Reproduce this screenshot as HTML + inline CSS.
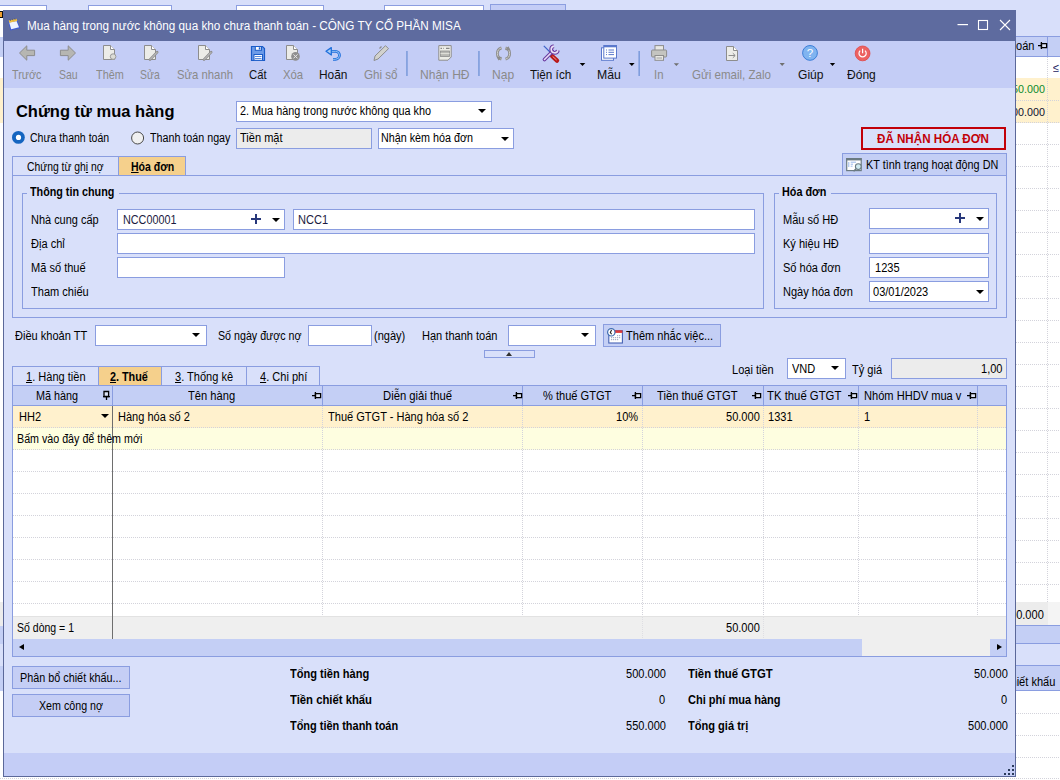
<!DOCTYPE html>
<html><head><meta charset="utf-8">
<style>
*{box-sizing:border-box;margin:0;padding:0}
html,body{width:1060px;height:780px;overflow:hidden;background:#d8dffa;font-family:"Liberation Sans",sans-serif;font-size:11px;color:#000}
.a{position:absolute}
.bgbox{position:absolute;background:#fff;border:1px solid #8c9ee0;border-bottom:none}
#win{position:absolute;left:3px;top:10px;width:1013px;height:767px;background:#d9e0fa;border:1px solid #5b6899;border-top:none}
#title{position:absolute;left:3px;top:10px;width:1013px;height:31px;background:#5e6b9f;color:#fff;font-size:11.7px}
#tb{position:absolute;left:4px;top:41px;width:1011px;height:47px;background:#c4cdf6}
.tbt{position:absolute;top:68px;width:120px;text-align:center;font-size:11.5px;line-height:14px;color:#8c8c8c;white-space:nowrap}
.inp{position:absolute;background:#fff;border:1px solid #8fa0e0;height:20px;white-space:nowrap;padding-left:5px;line-height:18px;font-size:11px}
.lbl{position:absolute;white-space:nowrap;font-size:11px}
.t{position:absolute;white-space:nowrap;transform-origin:0 50%}
.r{position:absolute}
.tri{position:absolute;width:0;height:0;border-style:solid;border-width:4px 4px 0;border-color:#000 transparent transparent}
.tril{position:absolute;width:0;height:0;border-style:solid;border-width:3.5px 5px 3.5px 0;border-color:transparent #000 transparent transparent}
.trir{position:absolute;width:0;height:0;border-style:solid;border-width:3.5px 0 3.5px 5px;border-color:transparent transparent transparent #000}
.plus{position:absolute;width:10px;height:10px;background:linear-gradient(#27377a,#27377a) center/10px 2px no-repeat,linear-gradient(#27377a,#27377a) center/2px 10px no-repeat}
.dots{position:absolute;background:repeating-linear-gradient(90deg,#d3d3db 0 1px,transparent 1px 2px)}
.vdots{position:absolute;background:repeating-linear-gradient(180deg,#d3d3db 0 1px,transparent 1px 2px)}
.pinv{position:absolute;width:6px;height:9px;border:1.5px solid #000;border-bottom:none}
.pinh{position:absolute;width:9px;height:7px}
</style></head><body>
<!-- background app -->
<div class="bgbox" style="left:-1px;top:5px;width:48px;height:10px"></div>
<div class="bgbox" style="left:88px;top:5px;width:84px;height:10px"></div>
<div class="bgbox" style="left:236px;top:5px;width:88px;height:10px"></div>
<div class="bgbox" style="left:384px;top:5px;width:100px;height:10px"></div>
<div class="bgbox" style="left:490px;top:4px;width:76px;height:10px;background:#c4cdf6"></div>

<div id="win"></div>
<div id="title"></div>
<div class="a" style="left:27px;top:18px;color:#fff;font-size:12px;line-height:16px;white-space:nowrap;transform:scaleX(0.976);transform-origin:0 0">Mua hàng trong nước không qua kho chưa thanh toán - CÔNG TY CỔ PHẦN MISA</div>
<div id="tb"></div>
<svg class="a" style="left:0;top:0" width="1060" height="90" viewBox="0 0 1060 90">
<!-- title icon -->
<path d="M8.2,21 L16.8,19.2 L20.2,28 L10.5,30.6 Z" fill="#3d5ad8"/>
<path d="M9.2,22.6 L16.5,21 L19,27.3 L11.2,29.3 Z" fill="#eef3ff"/>
<path d="M8.6,20.4 L16.6,18.8 L17.3,21 L9.3,22.8 Z" fill="#f2c040"/>
<path d="M10,19.3 L10.6,20.8 M12.3,18.8 L12.9,20.3 M14.6,18.3 L15.2,19.8" stroke="#556" stroke-width="0.8"/>
<!-- window buttons -->
<rect x="957.5" y="24" width="10.5" height="1.2" fill="#fff"/>
<rect x="978.5" y="20.5" width="9" height="9" fill="none" stroke="#fff" stroke-width="1.1"/>
<path d="M1000,20 L1010,30 M1010,20 L1000,30" stroke="#fff" stroke-width="1.1"/>
<!-- arrows -->
<path d="M19.5,53 L26.8,45.8 L26.8,50.2 L34.6,50.2 L34.6,55.6 L26.8,55.6 L26.8,60.2 Z" fill="#b6b6b2" stroke="#8d8d8d" stroke-width="1"/>
<path d="M75.5,53 L68.2,45.8 L68.2,50.2 L60.4,50.2 L60.4,55.6 L68.2,55.6 L68.2,60.2 Z" fill="#b6b6b2" stroke="#8d8d8d" stroke-width="1"/>
<!-- Them -->
<path d="M103.5,45.5 H110.5 L114.5,49.5 V59.5 H103.5 Z" fill="#ecece8" stroke="#8d8d8d" stroke-width="1"/>
<path d="M110.5,45.5 V49.5 H114.5" fill="#fff" stroke="#8d8d8d" stroke-width="1"/>
<circle cx="113.1" cy="56.6" r="2.8" fill="#dcdcd6" stroke="#9a9a9a" stroke-width="1"/>
<!-- Sua -->
<path d="M144.5,45.5 H151.5 L155.5,49.5 V59.5 H144.5 Z" fill="#ecece8" stroke="#8d8d8d" stroke-width="1"/>
<path d="M151.5,45.5 V49.5 H155.5" fill="#fff" stroke="#8d8d8d" stroke-width="1"/>
<path d="M157.2,52.2 L150,59.6" stroke="#8d8d8d" stroke-width="2.6" stroke-linecap="round"/>
<path d="M157.2,52.2 L150,59.6" stroke="#cfcfcf" stroke-width="1"/>
<!-- Sua nhanh -->
<path d="M198.5,45.5 H205.5 L209.5,49.5 V59.5 H198.5 Z" fill="#ecece8" stroke="#8d8d8d" stroke-width="1"/>
<path d="M205.5,45.5 V49.5 H209.5" fill="#fff" stroke="#8d8d8d" stroke-width="1"/>
<path d="M211.2,52.2 L204,59.6" stroke="#8d8d8d" stroke-width="2.6" stroke-linecap="round"/>
<path d="M211.2,52.2 L204,59.6" stroke="#cfcfcf" stroke-width="1"/>
<!-- Cat floppy -->
<path d="M251.5,46.5 L262.5,46.5 L264.5,48.5 L264.5,60.5 L251.5,60.5 Z" fill="#6c9be8" stroke="#1a5cc8" stroke-width="1.2"/>
<rect x="255.3" y="46.5" width="6.2" height="3.8" fill="#fff" stroke="#1a5cc8" stroke-width="1"/><rect x="258.8" y="47.3" width="1.6" height="2.2" fill="#1a5cc8"/>
<rect x="254" y="54.5" width="8.5" height="5.8" fill="#fff" stroke="#1a5cc8" stroke-width="1"/>
<path d="M255,56.5 H261.5 M255,58.5 H261.5" stroke="#4a7fd8" stroke-width="0.9"/>
<!-- Xoa -->
<path d="M286.5,45.5 H293.5 L297.5,49.5 V59.5 H286.5 Z" fill="#ecece8" stroke="#8d8d8d" stroke-width="1"/>
<path d="M293.5,45.5 V49.5 H297.5" fill="#fff" stroke="#8d8d8d" stroke-width="1"/>
<circle cx="295.5" cy="56.4" r="4.3" fill="#8f8f8f"/>
<path d="M293.5,54.4 L297.5,58.4 M297.5,54.4 L293.5,58.4" stroke="#e8e8e8" stroke-width="1"/>
<!-- Hoan undo -->
<path d="M328.5,51.3 H335.5 A4,4 0 0 1 335.5,59.3 H333" fill="none" stroke="#1f6fdc" stroke-width="2.8"/>
<path d="M328.5,51.3 H335.5 A4,4 0 0 1 335.5,59.3 H333" fill="none" stroke="#a9cdf5" stroke-width="0.9"/>
<path d="M326,51.3 L331.3,47.6 L331.3,55 Z" fill="#a9cdf5" stroke="#1f6fdc" stroke-width="1.3" stroke-linejoin="round"/>
<!-- Ghi so pencil -->
<path d="M374,60.5 L375,56 L385.5,45.7 L388.5,48.7 L378,59 Z" fill="#d2d2ce" stroke="#8d8d8d" stroke-width="1"/>
<path d="M381.5,46.5 L379.5,48.5" stroke="#8d8d8d" stroke-width="1.2"/>
<!-- sep -->
<rect x="406.3" y="51" width="1.3" height="25" fill="#6e92d6"/>
<rect x="478.3" y="51" width="1.3" height="25" fill="#6e92d6"/>
<rect x="638.5" y="51" width="1.3" height="25" fill="#6e92d6"/>
<!-- Nhan HD -->
<path d="M438.8,45.6 H451.2 V57 L448,60.2 H438.8 Z" fill="#ecece6" stroke="#8d8d8d" stroke-width="1"/>
<path d="M440.5,48.3 H442 M443.2,48.3 H443.8 M446,48.3 H449.5" stroke="#6e6e6e" stroke-width="1"/>
<rect x="440.5" y="51" width="9" height="5.5" fill="#b8b8b4" stroke="#8d8d8d" stroke-width="0.8"/>
<path d="M440.5,53.6 H449.5" stroke="#ecece6" stroke-width="0.8"/>
<!-- Nap refresh -->
<path d="M505.5,47.8 A6,6 0 0 1 505.5,59.2" fill="none" stroke="#8d8d8d" stroke-width="2.8"/>
<path d="M505.5,47.8 A6,6 0 0 1 505.5,59.2" fill="none" stroke="#cfcfcb" stroke-width="1"/>
<path d="M501.5,59.2 A6,6 0 0 1 501.5,47.8" fill="none" stroke="#8d8d8d" stroke-width="2.8"/>
<path d="M501.5,59.2 A6,6 0 0 1 501.5,47.8" fill="none" stroke="#cfcfcb" stroke-width="1"/>
<path d="M508.5,46.3 L510.5,50.5 L505,50" fill="#8d8d8d"/>
<path d="M498.5,60.5 L496.5,56.5 L502,57" fill="#8d8d8d"/>
<!-- Tien ich -->
<path d="M543.8,45.8 L551,53" stroke="#3f63c8" stroke-width="1.2"/>
<path d="M552,56 L557,60.6" stroke="#b81818" stroke-width="4.4" stroke-linecap="round"/>
<path d="M552.6,56.4 L556.6,60" stroke="#f4a0a0" stroke-width="1"/>
<path d="M544.5,59.5 L552.5,51.5" stroke="#6a3aa0" stroke-width="3.8" stroke-linecap="round"/>
<path d="M544.5,59.5 L552.5,51.5" stroke="#e8def6" stroke-width="1.6" stroke-linecap="round"/>
<path d="M557.9,50.2 A3.4,3.4 0 1 1 553.9,46.1" fill="none" stroke="#6a3aa0" stroke-width="3.8"/>
<path d="M557.9,50.2 A3.4,3.4 0 1 1 553.9,46.1" fill="none" stroke="#e8def6" stroke-width="1.6"/>
<path d="M579.7,63 H585.3 L582.5,66 Z" fill="#000"/>
<!-- Mau -->
<rect x="601.5" y="47.8" width="12" height="12.5" fill="#fff" stroke="#5a78cc" stroke-width="1"/>
<rect x="603.8" y="45.5" width="12.7" height="12.6" fill="#fff" stroke="#5a78cc" stroke-width="1"/>
<rect x="603.8" y="45.5" width="12.7" height="1.8" fill="#5a78cc"/>
<path d="M606,50 H607 M608.5,50 H614 M606,52.3 H607 M608.5,52.3 H614 M606,54.6 H607 M608.5,54.6 H614" stroke="#5a78cc" stroke-width="1"/>
<path d="M629,63 H634.6 L631.8,66 Z" fill="#000"/>
<!-- In printer -->
<rect x="655" y="45.6" width="8.5" height="5" fill="#e8e8e4" stroke="#8d8d8d" stroke-width="1"/>
<rect x="651.6" y="50" width="15" height="7" rx="1" fill="#c4c4c0" stroke="#8d8d8d" stroke-width="1"/>
<rect x="655" y="55.5" width="8.5" height="4.8" fill="#e8e8e4" stroke="#8d8d8d" stroke-width="1"/>
<path d="M656.5,58 H662" stroke="#8d8d8d" stroke-width="0.8"/>
<path d="M673.8,63.2 H679 L676.4,66 Z" fill="#707070"/>
<!-- Gui email -->
<path d="M726.5,46.5 H733.5 L737.5,50.5 V60.5 H726.5 Z" fill="#ecece8" stroke="#8d8d8d" stroke-width="1"/>
<path d="M733.5,46.5 V50.5 H737.5" fill="#fff" stroke="#8d8d8d" stroke-width="1"/>
<path d="M728.5,55.5 H735 M732.8,53.2 L735.2,55.5 L732.8,57.8" fill="none" stroke="#8d8d8d" stroke-width="1"/>
<path d="M779.6,63 H784.8 L782.2,66 Z" fill="#707070"/>
<!-- Giup -->
<circle cx="810" cy="52.9" r="7.4" fill="#80b4f0" stroke="#3d7fd8" stroke-width="1"/>
<text x="810" y="57.3" text-anchor="middle" font-family="Liberation Sans" font-size="11.5" fill="#fff">?</text>
<path d="M829.9,63 H835.1 L832.5,66 Z" fill="#000"/>
<!-- Dong -->
<circle cx="862.6" cy="53.4" r="7.4" fill="#ec6262" stroke="#e04848" stroke-width="0.8"/>
<path d="M860.2,50.6 A3.6,3.6 0 1 0 865,50.6" fill="none" stroke="#fff" stroke-width="1.2"/>
<path d="M862.6,48.8 V53.2" stroke="#fff" stroke-width="1.2"/>
</svg>

<!--BODY-->
<div class="t" style="left:12.20px;top:67.47px;font-size:12.20px;line-height:16px;color:#8a8a8a;transform:scaleX(0.8851)">Trước</div>
<div class="t" style="left:58.90px;top:67.47px;font-size:12.20px;line-height:16px;color:#8a8a8a;transform:scaleX(0.8614)">Sau</div>
<div class="t" style="left:96.00px;top:67.47px;font-size:12.20px;line-height:16px;color:#8a8a8a;transform:scaleX(0.8914)">Thêm</div>
<div class="t" style="left:139.50px;top:67.47px;font-size:12.20px;line-height:16px;color:#8a8a8a;transform:scaleX(0.8532)">Sửa</div>
<div class="t" style="left:176.50px;top:67.47px;font-size:12.20px;line-height:16px;color:#8a8a8a;transform:scaleX(0.9271)">Sửa nhanh</div>
<div class="t" style="left:248.90px;top:67.47px;font-size:12.20px;line-height:16px;color:#111;transform:scaleX(0.9270)">Cất</div>
<div class="t" style="left:282.50px;top:67.47px;font-size:12.20px;line-height:16px;color:#8a8a8a;transform:scaleX(0.9305)">Xóa</div>
<div class="t" style="left:319.20px;top:67.47px;font-size:12.20px;line-height:16px;color:#111;transform:scaleX(0.9771)">Hoãn</div>
<div class="t" style="left:363.80px;top:67.47px;font-size:12.20px;line-height:16px;color:#8a8a8a;transform:scaleX(0.9529)">Ghi sổ</div>
<div class="t" style="left:419.90px;top:67.47px;font-size:12.20px;line-height:16px;color:#8a8a8a;transform:scaleX(0.9885)">Nhận HĐ</div>
<div class="t" style="left:491.90px;top:67.47px;font-size:12.20px;line-height:16px;color:#8a8a8a;transform:scaleX(0.9874)">Nạp</div>
<div class="t" style="left:530.20px;top:67.47px;font-size:12.20px;line-height:16px;color:#111;transform:scaleX(0.9617)">Tiện ích</div>
<div class="t" style="left:597.00px;top:67.47px;font-size:12.20px;line-height:16px;color:#111;transform:scaleX(1.0070)">Mẫu</div>
<div class="t" style="left:654.00px;top:67.47px;font-size:12.20px;line-height:16px;color:#8a8a8a;transform:scaleX(0.9337)">In</div>
<div class="t" style="left:692.40px;top:67.47px;font-size:12.20px;line-height:16px;color:#8a8a8a;transform:scaleX(0.9482)">Gửi email, Zalo</div>
<div class="t" style="left:797.80px;top:67.47px;font-size:12.20px;line-height:16px;color:#111;transform:scaleX(0.9895)">Giúp</div>
<div class="t" style="left:847.20px;top:67.47px;font-size:12.20px;line-height:16px;color:#111;transform:scaleX(0.9874)">Đóng</div>
<div class="t" style="left:15.90px;top:103.48px;font-size:16.50px;line-height:16px;font-weight:bold">Chứng từ mua hàng</div>
<div class="r" style="left:236px;top:101px;width:256px;height:21px;background:#fff;border:1px solid #8a9de0"></div>
<div class="t" style="left:239.50px;top:103.00px;font-size:12.00px;line-height:16px;transform:scaleX(0.9036)">2. Mua hàng trong nước không qua kho</div>
<div class="tri" style="left:478px;top:109px"></div>
<svg class="r" style="left:0;top:120px" width="160" height="30"><circle cx="18.4" cy="17.4" r="6.4" fill="#1565c0"/><circle cx="18.5" cy="17.4" r="2.6" fill="#fff"/><circle cx="137.6" cy="18" r="6" fill="#f0f0f0" stroke="#4a4a4a" stroke-width="1"/></svg>
<div class="t" style="left:30.00px;top:130.00px;font-size:12.00px;line-height:16px;transform:scaleX(0.8790)">Chưa thanh toán</div>
<div class="t" style="left:149.60px;top:130.00px;font-size:12.00px;line-height:16px;transform:scaleX(0.8926)">Thanh toán ngay</div>
<div class="r" style="left:236px;top:128px;width:136px;height:21px;background:#ececec;border:1px solid #8a9de0"></div>
<div class="t" style="left:240.00px;top:130.00px;font-size:12.00px;line-height:16px;transform:scaleX(0.9200)">Tiền mặt</div>
<div class="r" style="left:378px;top:128px;width:136px;height:21px;background:#fff;border:1px solid #8a9de0"></div>
<div class="t" style="left:381.40px;top:130.00px;font-size:12.00px;line-height:16px;transform:scaleX(0.8967)">Nhận kèm hóa đơn</div>
<div class="tri" style="left:501px;top:137px"></div>
<div class="r" style="left:861px;top:127px;width:145px;height:23px;border:2px solid #c20008"></div>
<div class="t" style="left:877.00px;top:131.34px;font-size:12.00px;line-height:16px;font-weight:bold;color:#c20008;transform:scaleX(0.9673)">ĐÃ NHẬN HÓA ĐƠN</div>
<div class="r" style="left:12px;top:175px;width:995px;height:143px;border:1px solid #8a9de0"></div>
<div class="r" style="left:12px;top:156px;width:107px;height:20px;background:#d9e0fa;border:1px solid #8a9de0"></div>
<div class="r" style="left:118px;top:156px;width:68px;height:20px;background:#f5d08c;border:1px solid #8a9de0"></div>
<div class="t" style="left:27.20px;top:159.00px;font-size:12.00px;line-height:16px;transform:scaleX(0.8630)">Chứng từ gh<u>i</u> nợ</div>
<div class="t" style="left:131.40px;top:159.00px;font-size:12.00px;line-height:16px;font-weight:bold;transform:scaleX(0.8781)"><u>H</u>óa đơn</div>
<div class="r" style="left:842px;top:153px;width:165px;height:23px;background:#c4cff5;border:1px solid #8a9de0"></div>
<div class="t" style="left:866.40px;top:157.00px;font-size:12.00px;line-height:16px;transform:scaleX(0.9028)">KT tình trạng hoạt động DN</div>
<svg class="r" style="left:844px;top:156px" width="20" height="18"><rect x="2.7" y="2.6" width="14.5" height="12" fill="#fff" stroke="#6b7b82" stroke-width="1.2"/><rect x="2.2" y="2.2" width="15.5" height="2.2" fill="#6b7b82"/><path d="M4.8,6 V11 M6.7,6.2 H12 M6.7,8.2 H9 M6.7,10.2 H8.5" stroke="#8fb0e8" stroke-width="0.9"/><circle cx="14.3" cy="10.6" r="2.9" fill="#cfeaf0" stroke="#6b7b82" stroke-width="1.1"/><path d="M12.1,12.7 L9.6,15.2" stroke="#6b7b82" stroke-width="1.5"/></svg>
<div class="r" style="left:22px;top:193px;width:742px;height:116px;border:1px solid #8a9de0"></div>
<div class="r" style="left:774px;top:193px;width:223px;height:116px;border:1px solid #8a9de0"></div>
<div class="r" style="left:27px;top:185px;width:92px;height:16px;background:#d9e0fa"></div>
<div class="t" style="left:30.00px;top:184.00px;font-size:12.00px;line-height:16px;font-weight:bold;transform:scaleX(0.8970)">Thông tin chung</div>
<div class="r" style="left:779px;top:185px;width:52px;height:16px;background:#d9e0fa"></div>
<div class="t" style="left:781.80px;top:184.00px;font-size:12.00px;line-height:16px;font-weight:bold;transform:scaleX(0.9005)">Hóa đơn</div>
<div class="t" style="left:31.10px;top:212.00px;font-size:12.00px;line-height:16px;transform:scaleX(0.9129)">Nhà cung cấp</div>
<div class="t" style="left:31.10px;top:236.00px;font-size:12.00px;line-height:16px;transform:scaleX(0.9200)">Địa chỉ</div>
<div class="t" style="left:31.10px;top:260.00px;font-size:12.00px;line-height:16px;transform:scaleX(0.9200)">Mã số thuế</div>
<div class="t" style="left:31.10px;top:284.00px;font-size:12.00px;line-height:16px;transform:scaleX(0.9200)">Tham chiếu</div>
<div class="r" style="left:117px;top:209px;width:168px;height:21px;background:#fff;border:1px solid #8a9de0"></div>
<div class="t" style="left:123.00px;top:212.00px;font-size:12.00px;line-height:16px;color:#1a1a40;transform:scaleX(0.8995)">NCC00001</div>
<div class="plus" style="left:251px;top:214px"></div>
<div class="tri" style="left:271.5px;top:217.5px"></div>
<div class="r" style="left:293px;top:209px;width:462px;height:21px;background:#fff;border:1px solid #8a9de0"></div>
<div class="t" style="left:298.30px;top:212.00px;font-size:12.00px;line-height:16px;color:#1a1a40;transform:scaleX(0.9200)">NCC1</div>
<div class="r" style="left:117px;top:233px;width:638px;height:21px;background:#fff;border:1px solid #8a9de0"></div>
<div class="r" style="left:117px;top:257px;width:168px;height:21px;background:#fff;border:1px solid #8a9de0"></div>
<div class="t" style="left:783.10px;top:212.00px;font-size:12.00px;line-height:16px;transform:scaleX(0.9200)">Mẫu số HĐ</div>
<div class="t" style="left:783.10px;top:236.00px;font-size:12.00px;line-height:16px;transform:scaleX(0.9200)">Ký hiệu HĐ</div>
<div class="t" style="left:783.10px;top:260.00px;font-size:12.00px;line-height:16px;transform:scaleX(0.9200)">Số hóa đơn</div>
<div class="t" style="left:783.10px;top:284.00px;font-size:12.00px;line-height:16px;transform:scaleX(0.9200)">Ngày hóa đơn</div>
<div class="r" style="left:869px;top:208px;width:120px;height:21px;background:#fff;border:1px solid #8a9de0"></div>
<div class="plus" style="left:955px;top:213px"></div>
<div class="tri" style="left:975.5px;top:216.5px"></div>
<div class="r" style="left:869px;top:233px;width:120px;height:21px;background:#fff;border:1px solid #8a9de0"></div>
<div class="r" style="left:869px;top:257px;width:120px;height:21px;background:#fff;border:1px solid #8a9de0"></div>
<div class="t" style="left:874.60px;top:260.00px;font-size:12.00px;line-height:16px;transform:scaleX(0.9200)">1235</div>
<div class="r" style="left:869px;top:281px;width:120px;height:21px;background:#fff;border:1px solid #8a9de0"></div>
<div class="t" style="left:873.00px;top:284.00px;font-size:12.00px;line-height:16px;transform:scaleX(0.9200)">03/01/2023</div>
<div class="tri" style="left:975.5px;top:289.5px"></div>
<div class="t" style="left:15.00px;top:328.00px;font-size:12.00px;line-height:16px;transform:scaleX(0.9200)">Điều khoản TT</div>
<div class="r" style="left:95px;top:325px;width:112px;height:21px;background:#fff;border:1px solid #8a9de0"></div>
<div class="tri" style="left:192px;top:333px"></div>
<div class="t" style="left:218.00px;top:328.00px;font-size:12.00px;line-height:16px;transform:scaleX(0.8900)">Số ngày được nợ</div>
<div class="r" style="left:308px;top:325px;width:64px;height:21px;background:#fff;border:1px solid #8a9de0"></div>
<div class="t" style="left:374.00px;top:328.00px;font-size:12.00px;line-height:16px;transform:scaleX(0.9200)">(ngày)</div>
<div class="t" style="left:421.70px;top:328.00px;font-size:12.00px;line-height:16px;transform:scaleX(0.9200)">Hạn thanh toán</div>
<div class="r" style="left:508px;top:325px;width:88px;height:21px;background:#fff;border:1px solid #8a9de0"></div>
<div class="tri" style="left:581px;top:333px"></div>
<div class="r" style="left:603px;top:324px;width:118px;height:23px;background:#c4cff5;border:1px solid #8a9de0"></div>
<div class="t" style="left:626.20px;top:328.00px;font-size:12.00px;line-height:16px;transform:scaleX(0.9200)">Thêm nhắc việc...</div>
<svg class="r" style="left:604px;top:326px" width="22" height="20"><rect x="4.8" y="4.7" width="13.6" height="12.3" fill="#fff" stroke="#4562b4" stroke-width="1.1"/><rect x="4.8" y="4.3" width="13.6" height="2.6" fill="#dd3a3a"/><rect x="13" y="9" width="1.2" height="1.2" fill="#a8b0c8"/><rect x="15" y="9" width="1.2" height="1.2" fill="#a8b0c8"/><rect x="7" y="11" width="1.2" height="1.2" fill="#a8b0c8"/><rect x="9" y="11" width="1.2" height="1.2" fill="#a8b0c8"/><rect x="11" y="11" width="1.2" height="1.2" fill="#a8b0c8"/><rect x="13" y="11" width="1.2" height="1.2" fill="#a8b0c8"/><rect x="15" y="11" width="1.2" height="1.2" fill="#a8b0c8"/><rect x="7" y="13" width="1.2" height="1.2" fill="#a8b0c8"/><rect x="9" y="13" width="1.2" height="1.2" fill="#a8b0c8"/><rect x="11" y="13" width="1.2" height="1.2" fill="#a8b0c8"/><rect x="13" y="13" width="1.2" height="1.2" fill="#a8b0c8"/><circle cx="7.3" cy="6.3" r="3.7" fill="#fff" stroke="#3f6cb0" stroke-width="1.2"/><path d="M7.6,3.9 L6.3,6.4 L7.6,8.3" fill="none" stroke="#222" stroke-width="1.1"/></svg>
<div class="r" style="left:484px;top:350px;width:51px;height:8px;background:#d9e0fa;border:1px solid #8a9de0"></div>
<div class="tri" style="left:506px;top:352px;border-width:0 3.5px 4px;border-color:transparent transparent #333"></div>
<div class="t" style="left:732.00px;top:362.00px;font-size:12.00px;line-height:16px;transform:scaleX(0.9200)">Loại tiền</div>
<div class="r" style="left:787px;top:358px;width:59px;height:21px;background:#fff;border:1px solid #8a9de0"></div>
<div class="t" style="left:792.00px;top:361.00px;font-size:12.00px;line-height:16px;transform:scaleX(0.9200)">VND</div>
<div class="tri" style="left:831px;top:366px"></div>
<div class="t" style="left:852.00px;top:362.00px;font-size:12.00px;line-height:16px;transform:scaleX(0.9200)">Tỷ giá</div>
<div class="r" style="left:891px;top:358px;width:116px;height:21px;background:#ececec;border:1px solid #8a9de0"></div>
<div class="t" style="left:980.51px;top:361.00px;font-size:12.00px;line-height:16px;transform:scaleX(0.9200)">1,00</div>
<div class="r" style="left:12px;top:366px;width:87px;height:20px;background:#d9e0fa;border:1px solid #8a9de0"></div>
<div class="t" style="left:26.20px;top:369.00px;font-size:12.00px;line-height:16px;transform:scaleX(0.9200)"><u>1</u>. Hàng tiền</div>
<div class="r" style="left:98px;top:366px;width:64px;height:20px;background:#f5d08c;border:1px solid #8a9de0"></div>
<div class="t" style="left:110.20px;top:369.00px;font-size:12.00px;line-height:16px;font-weight:bold;transform:scaleX(0.9000)"><u>2</u>. Thuế</div>
<div class="r" style="left:161px;top:366px;width:86px;height:20px;background:#d9e0fa;border:1px solid #8a9de0"></div>
<div class="t" style="left:174.70px;top:369.00px;font-size:12.00px;line-height:16px;transform:scaleX(0.9200)"><u>3</u>. Thống kê</div>
<div class="r" style="left:246px;top:366px;width:74px;height:20px;background:#d9e0fa;border:1px solid #8a9de0"></div>
<div class="t" style="left:260.30px;top:369.00px;font-size:12.00px;line-height:16px;transform:scaleX(0.9200)"><u>4</u>. Chi phí</div>
<div class="r" style="left:12px;top:385px;width:995px;height:272px;background:#fff;border:1px solid #8a9de0"></div>
<div class="r" style="left:13px;top:386px;width:993px;height:20px;background:#c4cff5;border-bottom:1px solid #8a9de0"></div>
<div class="r" style="left:112px;top:386px;width:1px;height:20px;background:#8a9de0"></div>
<div class="r" style="left:322px;top:386px;width:1px;height:20px;background:#8a9de0"></div>
<div class="r" style="left:522px;top:386px;width:1px;height:20px;background:#8a9de0"></div>
<div class="r" style="left:642px;top:386px;width:1px;height:20px;background:#8a9de0"></div>
<div class="r" style="left:763px;top:386px;width:1px;height:20px;background:#8a9de0"></div>
<div class="r" style="left:858px;top:386px;width:1px;height:20px;background:#8a9de0"></div>
<div class="r" style="left:977px;top:386px;width:1px;height:20px;background:#8a9de0"></div>
<div class="r" style="left:13px;top:406px;width:993px;height:22px;background:#fff1cd"></div>
<div class="r" style="left:13px;top:428px;width:993px;height:22px;background:#fefee0"></div>
<div class="dots" style="left:13px;top:427px;width:993px;height:1px"></div>
<div class="dots" style="left:13px;top:449px;width:993px;height:1px"></div>
<div class="dots" style="left:13px;top:471px;width:993px;height:1px"></div>
<div class="dots" style="left:13px;top:493px;width:993px;height:1px"></div>
<div class="dots" style="left:13px;top:515px;width:993px;height:1px"></div>
<div class="dots" style="left:13px;top:537px;width:993px;height:1px"></div>
<div class="dots" style="left:13px;top:559px;width:993px;height:1px"></div>
<div class="dots" style="left:13px;top:581px;width:993px;height:1px"></div>
<div class="dots" style="left:13px;top:603px;width:993px;height:1px"></div>
<div class="vdots" style="left:322px;top:406px;width:1px;height:210px"></div>
<div class="vdots" style="left:522px;top:406px;width:1px;height:210px"></div>
<div class="vdots" style="left:642px;top:406px;width:1px;height:210px"></div>
<div class="vdots" style="left:763px;top:406px;width:1px;height:210px"></div>
<div class="vdots" style="left:858px;top:406px;width:1px;height:210px"></div>
<div class="vdots" style="left:977px;top:406px;width:1px;height:210px"></div>
<div class="r" style="left:112px;top:406px;width:1px;height:233px;background:#6e6e6e"></div>
<div class="t" style="left:35.60px;top:388.00px;font-size:12.00px;line-height:16px;transform:scaleX(0.9015)">Mã hàng</div>
<div class="t" style="left:188.20px;top:388.00px;font-size:12.00px;line-height:16px;transform:scaleX(0.9288)">Tên hàng</div>
<div class="t" style="left:382.80px;top:388.00px;font-size:12.00px;line-height:16px;transform:scaleX(0.9403)">Diễn giải thuế</div>
<div class="t" style="left:543.20px;top:388.00px;font-size:12.00px;line-height:16px;transform:scaleX(0.9227)">% thuế GTGT</div>
<div class="t" style="left:657.00px;top:388.00px;font-size:12.00px;line-height:16px;transform:scaleX(0.9333)">Tiền thuế GTGT</div>
<div class="t" style="left:766.90px;top:388.00px;font-size:12.00px;line-height:16px;transform:scaleX(0.9443)">TK thuế GTGT</div>
<div class="t" style="left:863.50px;top:388.00px;font-size:12.00px;line-height:16px;transform:scaleX(0.9244)">Nhóm HHDV mua v</div>
<svg class="r" style="left:100px;top:388px" width="14" height="14"><path d="M4,3.5 H8.6 V8.5 H4 Z" fill="#dde3f5" stroke="#000" stroke-width="1.3"/><path d="M3,8.6 H9.9 M6.5,8.6 V12" stroke="#000" stroke-width="1.3"/></svg>
<svg class="r" style="left:312px;top:392px" width="12" height="9"><path d="M3.5,1.6 H8.6 V5.6 H3.5 Z" fill="#dde3f5" stroke="#000" stroke-width="1.3"/><path d="M0,3.6 H3.4 M3.4,0 V7" stroke="#000" stroke-width="1.3"/></svg>
<svg class="r" style="left:513px;top:392px" width="12" height="9"><path d="M3.5,1.6 H8.6 V5.6 H3.5 Z" fill="#dde3f5" stroke="#000" stroke-width="1.3"/><path d="M0,3.6 H3.4 M3.4,0 V7" stroke="#000" stroke-width="1.3"/></svg>
<svg class="r" style="left:632px;top:392px" width="12" height="9"><path d="M3.5,1.6 H8.6 V5.6 H3.5 Z" fill="#dde3f5" stroke="#000" stroke-width="1.3"/><path d="M0,3.6 H3.4 M3.4,0 V7" stroke="#000" stroke-width="1.3"/></svg>
<svg class="r" style="left:752px;top:392px" width="12" height="9"><path d="M3.5,1.6 H8.6 V5.6 H3.5 Z" fill="#dde3f5" stroke="#000" stroke-width="1.3"/><path d="M0,3.6 H3.4 M3.4,0 V7" stroke="#000" stroke-width="1.3"/></svg>
<svg class="r" style="left:848px;top:392px" width="12" height="9"><path d="M3.5,1.6 H8.6 V5.6 H3.5 Z" fill="#dde3f5" stroke="#000" stroke-width="1.3"/><path d="M0,3.6 H3.4 M3.4,0 V7" stroke="#000" stroke-width="1.3"/></svg>
<svg class="r" style="left:967px;top:392px" width="12" height="9"><path d="M3.5,1.6 H8.6 V5.6 H3.5 Z" fill="#dde3f5" stroke="#000" stroke-width="1.3"/><path d="M0,3.6 H3.4 M3.4,0 V7" stroke="#000" stroke-width="1.3"/></svg>
<div class="t" style="left:19.00px;top:409.00px;font-size:12.00px;line-height:16px;transform:scaleX(0.9200)">HH2</div>
<div class="tri" style="left:100.5px;top:414px"></div>
<div class="t" style="left:118.00px;top:409.00px;font-size:12.00px;line-height:16px;transform:scaleX(0.9200)">Hàng hóa số 2</div>
<div class="t" style="left:328.20px;top:409.00px;font-size:12.00px;line-height:16px;transform:scaleX(0.9200)">Thuế GTGT - Hàng hóa số 2</div>
<div class="t" style="left:615.70px;top:409.00px;font-size:12.00px;line-height:16px;transform:scaleX(0.9200)">10%</div>
<div class="t" style="left:726.23px;top:409.00px;font-size:12.00px;line-height:16px;transform:scaleX(0.9200)">50.000</div>
<div class="t" style="left:768.00px;top:409.00px;font-size:12.00px;line-height:16px;transform:scaleX(0.9200)">1331</div>
<div class="t" style="left:864.00px;top:409.00px;font-size:12.00px;line-height:16px;transform:scaleX(0.9200)">1</div>
<div class="t" style="left:16.50px;top:431.00px;font-size:12.00px;line-height:16px;transform:scaleX(0.8912)">Bấm vào đây để thêm mới</div>
<div class="r" style="left:13px;top:616px;width:993px;height:23px;background:#efefef;border-top:1px solid #e2e2e2"></div>
<div class="r" style="left:112px;top:616px;width:1px;height:23px;background:#6e6e6e"></div>
<div class="vdots" style="left:642px;top:617px;width:1px;height:21px;opacity:.6"></div>
<div class="vdots" style="left:763px;top:617px;width:1px;height:21px;opacity:.6"></div>
<div class="t" style="left:17.20px;top:620.00px;font-size:12.00px;line-height:16px;transform:scaleX(0.8761)">Số dòng = 1</div>
<div class="t" style="left:726.23px;top:620.00px;font-size:12.00px;line-height:16px;transform:scaleX(0.9200)">50.000</div>
<div class="r" style="left:13px;top:639px;width:993px;height:17px;background:#c4cff5"></div>
<div class="r" style="left:862px;top:639px;width:128px;height:17px;background:#efefef"></div>
<div class="r" style="left:990px;top:639px;width:16px;height:17px;background:#c4cff5"></div>
<div class="tril" style="left:19px;top:644px"></div>
<div class="trir" style="left:997px;top:644px"></div>
<div class="r" style="left:12px;top:666px;width:118px;height:23px;background:#c5cef5;border:1px solid #8a9de0"></div>
<div class="t" style="left:20.10px;top:670.00px;font-size:12.00px;line-height:16px;transform:scaleX(0.9011)">Phân bổ chiết khấu...</div>
<div class="r" style="left:12px;top:694px;width:118px;height:23px;background:#c5cef5;border:1px solid #8a9de0"></div>
<div class="t" style="left:39.10px;top:698.00px;font-size:12.00px;line-height:16px;transform:scaleX(0.8900)">Xem công nợ</div>
<div class="t" style="left:289.90px;top:666.00px;font-size:12.00px;line-height:16px;font-weight:bold;transform:scaleX(0.9211)">Tổng tiền hàng</div>
<div class="t" style="left:625.59px;top:666.00px;font-size:12.00px;line-height:16px;transform:scaleX(0.9200)">500.000</div>
<div class="t" style="left:289.90px;top:692.00px;font-size:12.00px;line-height:16px;font-weight:bold;transform:scaleX(0.9410)">Tiền chiết khấu</div>
<div class="t" style="left:659.36px;top:692.00px;font-size:12.00px;line-height:16px;transform:scaleX(0.9200)">0</div>
<div class="t" style="left:289.90px;top:718.00px;font-size:12.00px;line-height:16px;font-weight:bold;transform:scaleX(0.9111)">Tổng tiền thanh toán</div>
<div class="t" style="left:625.59px;top:718.00px;font-size:12.00px;line-height:16px;transform:scaleX(0.9200)">550.000</div>
<div class="t" style="left:687.90px;top:666.00px;font-size:12.00px;line-height:16px;font-weight:bold;transform:scaleX(0.9423)">Tiền thuế GTGT</div>
<div class="t" style="left:973.73px;top:666.00px;font-size:12.00px;line-height:16px;transform:scaleX(0.9200)">50.000</div>
<div class="t" style="left:687.90px;top:692.00px;font-size:12.00px;line-height:16px;font-weight:bold;transform:scaleX(0.9189)">Chi phí mua hàng</div>
<div class="t" style="left:1001.36px;top:692.00px;font-size:12.00px;line-height:16px;transform:scaleX(0.9200)">0</div>
<div class="t" style="left:687.90px;top:718.00px;font-size:12.00px;line-height:16px;font-weight:bold;transform:scaleX(0.9215)">Tổng giá trị</div>
<div class="t" style="left:967.59px;top:718.00px;font-size:12.00px;line-height:16px;transform:scaleX(0.9200)">500.000</div>
<div class="r" style="left:4px;top:753px;width:1011px;height:23px;background:#c4cdf6"></div>
<div class="r" style="left:1012px;top:765px;width:2px;height:2px;background:#2a3a5a"></div>
<div class="r" style="left:1008px;top:769px;width:2px;height:2px;background:#2a3a5a"></div>
<div class="r" style="left:1012px;top:769px;width:2px;height:2px;background:#2a3a5a"></div>
<div class="r" style="left:1004px;top:773px;width:2px;height:2px;background:#2a3a5a"></div>
<div class="r" style="left:1008px;top:773px;width:2px;height:2px;background:#2a3a5a"></div>
<div class="r" style="left:1012px;top:773px;width:2px;height:2px;background:#2a3a5a"></div>
<div class="r" style="left:0;top:0;width:1060px;height:780px;clip-path:inset(0 0 0 1016px)">
<div class="r" style="left:1016px;top:36px;width:44px;height:21px;background:#c4cff5;border-top:1px solid #8a9de0;border-bottom:1px solid #8a9de0"></div>
<div class="r" style="left:1047px;top:36px;width:1px;height:21px;background:#8a9de0"></div>
<div class="t" style="left:1015.58px;top:38.00px;font-size:12.00px;line-height:16px;transform:scaleX(0.9200)">oán</div>
<svg class="r" style="left:1038px;top:42px" width="12" height="9"><path d="M3.5,1.6 H8.6 V5.6 H3.5 Z" fill="#dde3f5" stroke="#000" stroke-width="1.3"/><path d="M0,3.6 H3.4 M3.4,0 V7" stroke="#000" stroke-width="1.3"/></svg>
<div class="r" style="left:1016px;top:57px;width:44px;height:21px;background:#fff"></div>
<div class="r" style="left:1016px;top:78px;width:44px;height:45px;background:#fff1cd"></div>
<div class="dots" style="left:1016px;top:100px;width:44px;height:1px"></div>
<div class="r" style="left:1016px;top:123px;width:44px;height:479px;background:#fff"></div>
<div class="t" style="left:1011.58px;top:81.35px;font-size:11.70px;line-height:16px;color:#0e8a2e;transform:scaleX(0.9200)">50.000</div>
<div class="t" style="left:1011.58px;top:103.55px;font-size:11.70px;line-height:16px;color:#101030;transform:scaleX(0.9200)">00.000</div>
<div class="dots" style="left:1016px;top:122px;width:44px;height:1px"></div>
<div class="dots" style="left:1016px;top:144px;width:44px;height:1px"></div>
<div class="dots" style="left:1016px;top:166px;width:44px;height:1px"></div>
<div class="dots" style="left:1016px;top:188px;width:44px;height:1px"></div>
<div class="dots" style="left:1016px;top:210px;width:44px;height:1px"></div>
<div class="dots" style="left:1016px;top:232px;width:44px;height:1px"></div>
<div class="dots" style="left:1016px;top:254px;width:44px;height:1px"></div>
<div class="dots" style="left:1016px;top:276px;width:44px;height:1px"></div>
<div class="dots" style="left:1016px;top:298px;width:44px;height:1px"></div>
<div class="dots" style="left:1016px;top:320px;width:44px;height:1px"></div>
<div class="dots" style="left:1016px;top:342px;width:44px;height:1px"></div>
<div class="dots" style="left:1016px;top:364px;width:44px;height:1px"></div>
<div class="dots" style="left:1016px;top:386px;width:44px;height:1px"></div>
<div class="dots" style="left:1016px;top:408px;width:44px;height:1px"></div>
<div class="dots" style="left:1016px;top:430px;width:44px;height:1px"></div>
<div class="dots" style="left:1016px;top:452px;width:44px;height:1px"></div>
<div class="dots" style="left:1016px;top:474px;width:44px;height:1px"></div>
<div class="dots" style="left:1016px;top:496px;width:44px;height:1px"></div>
<div class="dots" style="left:1016px;top:518px;width:44px;height:1px"></div>
<div class="dots" style="left:1016px;top:540px;width:44px;height:1px"></div>
<div class="dots" style="left:1016px;top:562px;width:44px;height:1px"></div>
<div class="dots" style="left:1016px;top:584px;width:44px;height:1px"></div>
<div class="vdots" style="left:1047px;top:57px;width:1px;height:545px"></div>
<div class="t" style="left:1053.00px;top:60.34px;font-size:12.00px;line-height:16px;color:#1a1a60;transform:scaleX(0.9200)">≤</div>
<div class="r" style="left:1016px;top:602px;width:44px;height:24px;background:#ececec"></div>
<div class="r" style="left:1048px;top:602px;width:12px;height:24px;background:#f4f4f4"></div>
<div class="t" style="left:1010.23px;top:607.00px;font-size:12.00px;line-height:16px;transform:scaleX(0.9200)">00.000</div>
<div class="r" style="left:1016px;top:625px;width:44px;height:19px;background:#c4cff5;border-top:1px solid #8a9de0;border-bottom:1px solid #8a9de0"></div>
<div class="r" style="left:1016px;top:644px;width:44px;height:21px;background:#d9e0fa"></div>
<div class="r" style="left:1016px;top:665px;width:44px;height:26px;background:#c4cff5;border-top:1px solid #8a9de0;border-bottom:1px solid #8a9de0"></div>
<div class="t" style="left:1004.67px;top:674.00px;font-size:12.00px;line-height:16px;transform:scaleX(0.9200)">chiết khấu</div>
<div class="r" style="left:1016px;top:691px;width:44px;height:89px;background:#fff"></div>
<div class="dots" style="left:1016px;top:713px;width:44px;height:1px"></div>
<div class="dots" style="left:1016px;top:735px;width:44px;height:1px"></div>
<div class="dots" style="left:1016px;top:757px;width:44px;height:1px"></div>
<div class="dots" style="left:1016px;top:779px;width:44px;height:1px"></div>
</div>
<div class="r" style="left:0px;top:777px;width:1060px;height:3px;background:#fff"></div>
<div class="dots" style="left:0px;top:778px;width:1060px;height:1px"></div>
<div class="r" style="left:0px;top:11px;width:3px;height:7px;background:#fff;border:1px solid #111;border-left:none;background:#f0a030"></div>
<div class="r" style="left:0px;top:18px;width:3px;height:19px;background:#fff"></div>
<div class="r" style="left:0px;top:37px;width:3px;height:20px;background:#c4cff5"></div>
<div class="r" style="left:0px;top:57px;width:3px;height:21px;background:#fff"></div>
<div class="r" style="left:0px;top:78px;width:3px;height:45px;background:#fff1cd"></div>
<div class="r" style="left:0px;top:123px;width:3px;height:479px;background:#fff"></div>
<div class="r" style="left:0px;top:602px;width:3px;height:24px;background:#ececec"></div>
<div class="r" style="left:0px;top:626px;width:3px;height:18px;background:#c4cff5"></div>
<div class="r" style="left:0px;top:644px;width:3px;height:22px;background:#d9e0fa"></div>
<div class="r" style="left:0px;top:666px;width:3px;height:25px;background:#c4cff5"></div>
<div class="r" style="left:0px;top:691px;width:3px;height:86px;background:#fff"></div>
<!--/BODY-->
</body></html>
